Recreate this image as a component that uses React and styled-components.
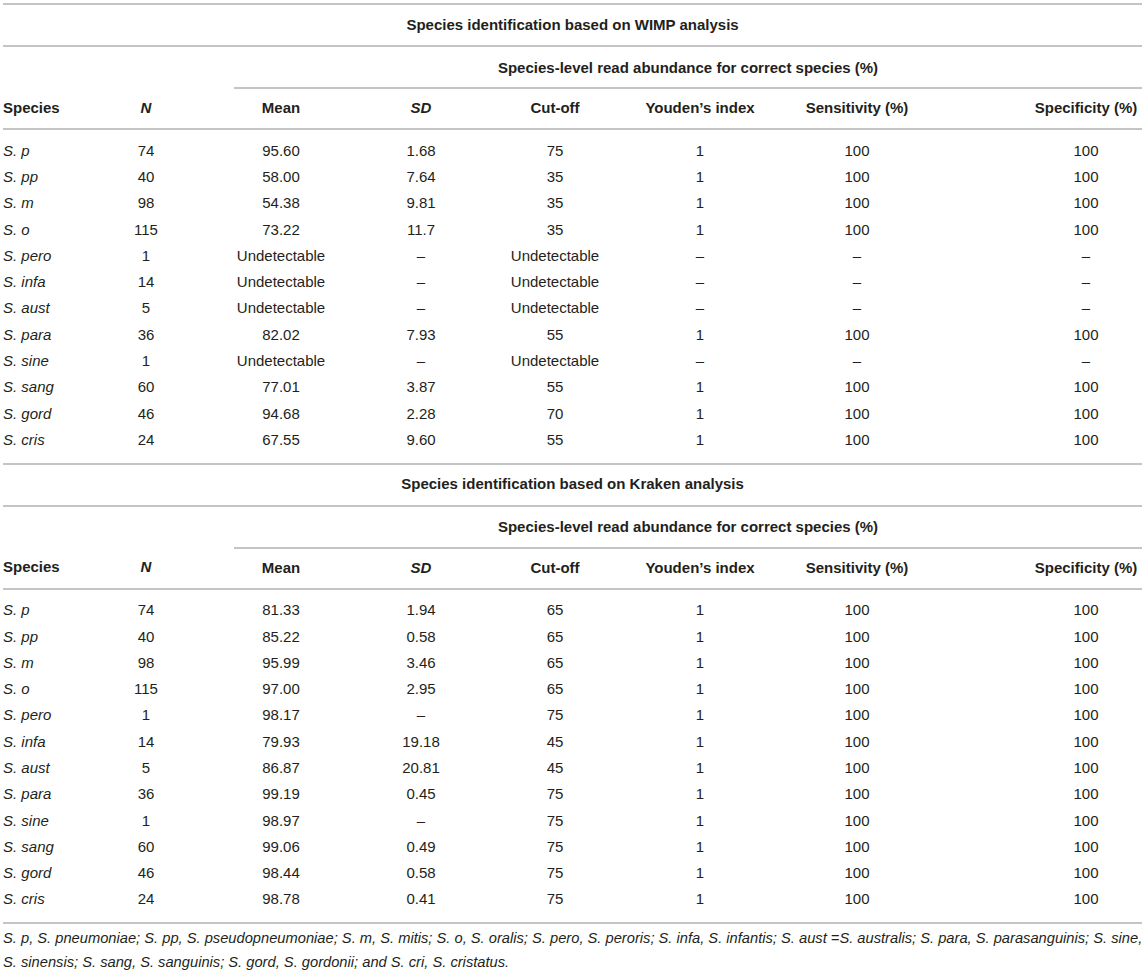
import React from 'react';
import styled, { createGlobalStyle, css } from 'styled-components';

const RULE = '#c4c4c4';

// column layout: width plus side padding used to nudge the centred text
const COLS = [
  { w: 55, pl: 0, pr: 0 },
  { w: 176, pl: 0, pr: 0 },
  { w: 94, pl: 0, pr: 0 },
  { w: 172, pl: 14, pr: 0 },
  { w: 110, pl: 0, pr: 0 },
  { w: 180, pl: 0, pr: 0 },
  { w: 240, pl: 0, pr: 106 },
  { w: 112, pl: 0, pr: 0 },
];

const colPadding = css`
  ${COLS.map(
    (c, i) => `
    & > *:nth-child(${i + 1}) {
      padding-left: ${c.pl}px;
      padding-right: ${c.pr}px;
    }
  `
  ).join('')}
`;

const GlobalStyle = createGlobalStyle`
  body {
    margin: 0;
    background: #ffffff;
  }
`;

const Page = styled.div`
  padding: 3px 3px 0;
  font-family: 'Liberation Sans', Arial, sans-serif;
  font-size: 15px;
  color: #231f20;
`;

const Table = styled.table`
  width: 100%;
  border-collapse: collapse;
  table-layout: fixed;
  border-top: 2px solid ${RULE};
`;

const Col = styled.col`
  width: ${(p) => p.$w}px;
`;

const TitleCell = styled.td`
  height: 38px;
  padding: 0 0 2px;
  text-align: center;
  font-weight: bold;
  border-bottom: 2px solid ${RULE};
`;

const SubCell = styled.td`
  height: 38px;
  padding: 1px 0 1px;
  text-align: center;
  font-weight: bold;
  border-bottom: ${(p) => (p.$rule ? `2px solid ${RULE}` : 'none')};
`;

const HeadRow = styled.tr`
  ${colPadding}
`;

const HeadCell = styled.th`
  height: 37px;
  padding-top: 0;
  padding-bottom: 2px;
  font-weight: bold;
  font-style: ${(p) => (p.$italic ? 'italic' : 'normal')};
  text-align: ${(p) => (p.$left ? 'left' : 'center')};
  border-bottom: 2px solid ${RULE};
  white-space: nowrap;
`;

const DataRow = styled.tr`
  ${colPadding}

  &:first-child > td {
    padding-top: 7px;
  }

  &:last-child > td {
    padding-bottom: 10px;
    border-bottom: 2px solid ${RULE};
  }
`;

const Cell = styled.td`
  height: 26.3px;
  padding-top: 0;
  padding-bottom: 0;
  text-align: ${(p) => (p.$left ? 'left' : 'center')};
  font-style: ${(p) => (p.$italic ? 'italic' : 'normal')};
  white-space: nowrap;
`;

const Footnote = styled.p`
  margin: 0;
  padding: 2px 0 0;
  font-size: 14.7px;
  line-height: 24px;
  font-style: italic;
  white-space: nowrap;
`;

const HEADERS = [
  { label: 'Species', left: true },
  { label: 'N', italic: true },
  { label: 'Mean' },
  { label: 'SD', italic: true },
  { label: 'Cut-off' },
  { label: 'Youden’s index' },
  { label: 'Sensitivity (%)' },
  { label: 'Specificity (%)' },
];

const D = '–';
const U = 'Undetectable';

const SECTIONS = [
  {
    title: 'Species identification based on WIMP analysis',
    rows: [
      ['S. p', '74', '95.60', '1.68', '75', '1', '100', '100'],
      ['S. pp', '40', '58.00', '7.64', '35', '1', '100', '100'],
      ['S. m', '98', '54.38', '9.81', '35', '1', '100', '100'],
      ['S. o', '115', '73.22', '11.7', '35', '1', '100', '100'],
      ['S. pero', '1', U, D, U, D, D, D],
      ['S. infa', '14', U, D, U, D, D, D],
      ['S. aust', '5', U, D, U, D, D, D],
      ['S. para', '36', '82.02', '7.93', '55', '1', '100', '100'],
      ['S. sine', '1', U, D, U, D, D, D],
      ['S. sang', '60', '77.01', '3.87', '55', '1', '100', '100'],
      ['S. gord', '46', '94.68', '2.28', '70', '1', '100', '100'],
      ['S. cris', '24', '67.55', '9.60', '55', '1', '100', '100'],
    ],
  },
  {
    title: 'Species identification based on Kraken analysis',
    rows: [
      ['S. p', '74', '81.33', '1.94', '65', '1', '100', '100'],
      ['S. pp', '40', '85.22', '0.58', '65', '1', '100', '100'],
      ['S. m', '98', '95.99', '3.46', '65', '1', '100', '100'],
      ['S. o', '115', '97.00', '2.95', '65', '1', '100', '100'],
      ['S. pero', '1', '98.17', D, '75', '1', '100', '100'],
      ['S. infa', '14', '79.93', '19.18', '45', '1', '100', '100'],
      ['S. aust', '5', '86.87', '20.81', '45', '1', '100', '100'],
      ['S. para', '36', '99.19', '0.45', '75', '1', '100', '100'],
      ['S. sine', '1', '98.97', D, '75', '1', '100', '100'],
      ['S. sang', '60', '99.06', '0.49', '75', '1', '100', '100'],
      ['S. gord', '46', '98.44', '0.58', '75', '1', '100', '100'],
      ['S. cris', '24', '98.78', '0.41', '75', '1', '100', '100'],
    ],
  },
];

function Section({ title, rows }) {
  return (
    <>
      <tbody>
        <tr>
          <TitleCell colSpan={8}>{title}</TitleCell>
        </tr>
        <tr>
          <SubCell colSpan={2} />
          <SubCell colSpan={6} $rule>
            Species-level read abundance for correct species (%)
          </SubCell>
        </tr>
        <HeadRow>
          {HEADERS.map((h) => (
            <HeadCell key={h.label} $left={h.left} $italic={h.italic}>
              {h.label}
            </HeadCell>
          ))}
        </HeadRow>
      </tbody>
      <tbody>
        {rows.map((r) => (
          <DataRow key={r[0]}>
            {r.map((v, i) => (
              <Cell key={i} $left={i === 0} $italic={i === 0}>
                {v}
              </Cell>
            ))}
          </DataRow>
        ))}
      </tbody>
    </>
  );
}

export default function App() {
  return (
    <Page>
      <GlobalStyle />
      <Table>
        <colgroup>
          {COLS.map((c, i) => (
            <Col key={i} $w={c.w} />
          ))}
        </colgroup>
        {SECTIONS.map((s) => (
          <Section key={s.title} title={s.title} rows={s.rows} />
        ))}
      </Table>
      <Footnote>
        S. p, S. pneumoniae; S. pp, S. pseudopneumoniae; S. m, S. mitis; S. o, S. oralis; S. pero, S. peroris; S.
        infa, S. infantis; S. aust =S. australis; S. para, S. parasanguinis; S. sine,
        <br />
        S. sinensis; S. sang, S. sanguinis; S. gord, S. gordonii; and S. cri, S. cristatus.
      </Footnote>
    </Page>
  );
}
